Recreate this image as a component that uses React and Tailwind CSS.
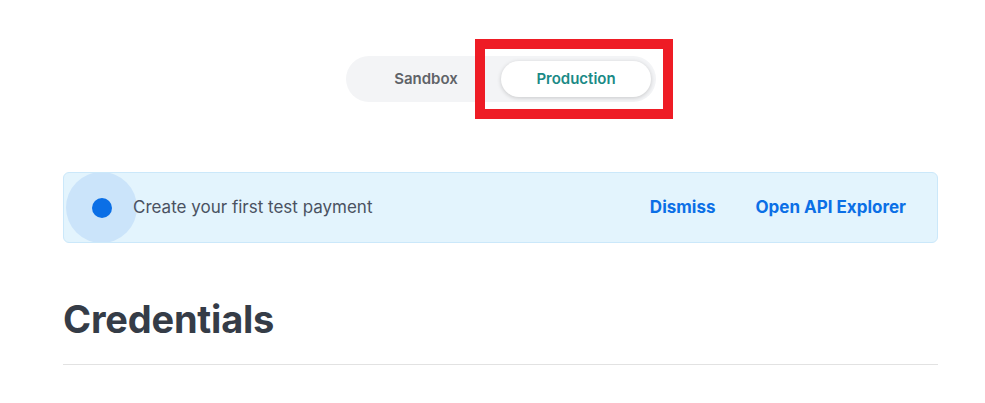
const App = () => {
  return (
    <div className="w-[985px] h-[403px] bg-white overflow-hidden font-['Inter',sans-serif]">
      {/* Environment toggle */}
      <div className="pt-[56px] pl-[346px]">
        <div className="relative flex w-[310px] h-[46px] p-[5px] rounded-full bg-[#f3f4f6]">
          <button className="w-[150px] h-[36px] rounded-full text-[15px] font-semibold text-[#5f6368]">
            Sandbox
          </button>
          <button className="w-[150px] h-[36px] rounded-full bg-white shadow-[0_1px_4px_rgba(0,0,0,0.18)] text-[15px] font-semibold text-[#1a8a86]">
            Production
          </button>
          <div className="absolute left-[129px] top-[-17px] w-[198px] h-[80px] border-[10px] border-[#ee1c25]" />
        </div>
      </div>

      <div className="w-[875px] ml-[63px] pt-[70px]">
        {/* Banner */}
        <div className="flex items-center h-[71px] rounded-[6px] border border-[#cbe8fa] bg-[#e3f4fd] pr-[31px] overflow-hidden">
          <div className="flex items-center justify-center w-[71px] h-[71px] ml-[2px] rounded-full bg-[#cbe4fa] shrink-0">
            <div className="w-[20px] h-[20px] rounded-full bg-[#0b6fe6]" />
          </div>
          <p className="-ml-[4px] text-[17px] text-[#4a5261]">Create your first test payment</p>
          <div className="ml-auto flex items-center gap-[40px] text-[17px] font-bold text-[#0b6fe6]">
            <span>Dismiss</span>
            <span>Open API Explorer</span>
          </div>
        </div>

        {/* Credentials */}
        <h1 className="mt-[53px] text-[38px] leading-[46px] font-bold text-[#353c47] tracking-[-0.2px]">Credentials</h1>
        <div className="mt-[22px] h-px bg-[#e2e2e2]" />
      </div>
    </div>
  );
};

export default App;
